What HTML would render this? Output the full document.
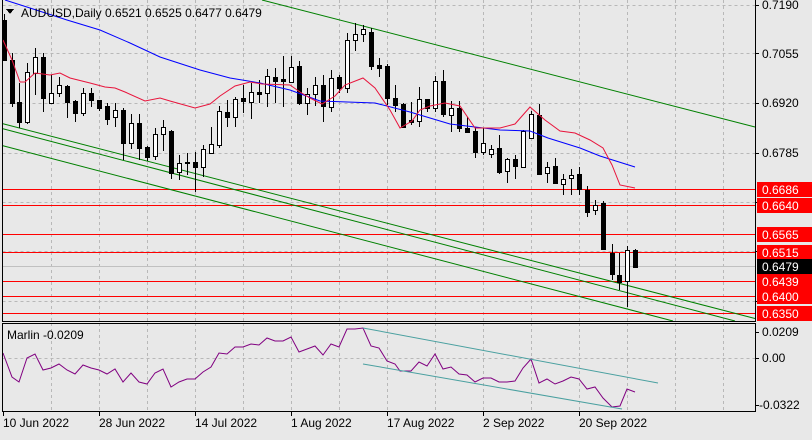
<!DOCTYPE html>
<html><head><meta charset="utf-8">
<style>
html,body{margin:0;padding:0;background:#e8e8e8;}
body{width:812px;height:435px;overflow:hidden;font-family:"Liberation Sans",sans-serif;}
svg text{font-family:"Liberation Sans",sans-serif;font-size:12px;}
</style></head><body>
<svg id="s" width="812" height="435" xmlns="http://www.w3.org/2000/svg" shape-rendering="crispEdges">
<rect width="812" height="435" fill="#e8e8e8"/>
<g stroke="#b8b8b8" stroke-dasharray="3,3" stroke-width="1">
<path d="M2.5 5.5H755M2.5 53.5H755M2.5 103.5H755M2.5 153.5H755M2.5 202.5H755M2.5 251.5H755M2.5 301.5H755M2.5 358.5H755"/>
<path d="M51.5 0V321M99.5 0V321M147.5 0V321M195.5 0V321M243.5 0V321M291.5 0V321M339.5 0V321M387.5 0V321M435.5 0V321M483.5 0V321M531.5 0V321M579.5 0V321M627.5 0V321M675.5 0V321M723.5 0V321"/>
<path d="M51.5 323V411M99.5 323V411M147.5 323V411M195.5 323V411M243.5 323V411M291.5 323V411M339.5 323V411M387.5 323V411M435.5 323V411M483.5 323V411M531.5 323V411M579.5 323V411M627.5 323V411M675.5 323V411M723.5 323V411"/>
</g>
<line x1="2" y1="266.5" x2="755" y2="266.5" stroke="#c0c0c0"/>
<g stroke="#ff0000" stroke-width="1">
<path d="M2 189.5H755M2 205.5H755M2 234.5H755M2 252.5H755M2 281.5H755M2 296.5H755M2 313.5H755"/>
</g>
<g stroke="#008000" stroke-width="1" fill="none" shape-rendering="auto">
<path d="M262 0L755 127"/>
<path d="M2 123.5L755 318.5"/>
<path d="M2 128.5L735 321"/>
<path d="M2 145.5L673 321"/>
</g>
<g id="c"></g>
<polyline shape-rendering="auto" fill="none" stroke="#0000ff" stroke-width="1" points="5,0 30,8 67,20 100,30 130,43 160,57 200,70 230,78 260,83 290,90 320,101 375,103 410,112 450,124 500,130 530,131 548,138 580,148 600,156 635,167"/>
<polyline shape-rendering="auto" fill="none" stroke="#e8143c" stroke-width="1" points="3,40 12,60 20,82 25,82 35,73 50,75 60,73 70,78 90,83 105,87 115,88 125,92 145,101 160,98 170,101 195,108 210,104 220,96 235,86 250,82 262,84 290,85 300,92 310,98 322,104 335,96 345,85 363,78 375,88 390,110 400,128 412,121 420,110 430,106 445,103 460,106 475,128 485,128 500,128 515,124 530,107 545,120 560,131 575,133 590,140 603,148 612,165 620,185 635,188"/>
<polyline shape-rendering="auto" fill="none" stroke="#800080" stroke-width="1" points="3,353 12,377 19,382 27,358 35,354 43,370 51,368 59,364 67,370 75,374 83,365 91,368 99,370 107,374 115,369 123,382 131,373 139,382 147,384 155,373 163,369 171,387 179,382 187,379 195,379 203,372 211,367 219,353 227,354 235,347 243,347 251,344 259,345 267,338 275,341 283,341 291,337 299,352 307,349 315,346 323,355 331,344 339,347 347,329 355,329 363,328 371,346 379,348 387,361 395,364 400,371 411,371 419,362 427,366 435,354 443,369 451,367 459,374 467,375 475,382 483,378 491,378 499,382 507,382 515,381 523,368 531,359 539,383 547,379 555,384 563,381 571,377 579,379 587,389 595,387 603,398 612,407 620,406 627,389 635,392"/>
<g stroke="#4aa0a0" stroke-width="1" shape-rendering="auto">
<line x1="363" y1="328" x2="658" y2="383"/>
<line x1="363" y1="364" x2="622" y2="409"/>
</g>
<g fill="none" stroke="#000" stroke-width="1">
<path d="M2.5 0V321.5H755.5V0"/>
<rect x="2.5" y="323.5" width="753" height="88"/>
</g>
<g stroke="#000">
<path d="M755 5.5h4M755 53.5h4M755 103.5h4M755 153.5h4M755 202.5h4M755 251.5h4M755 301.5h4M755 332.5h4M755 358.5h4M755 405.5h4"/>
<path d="M3.5 411v5M99.5 411v5M195.5 411v5M291.5 411v5M387.5 411v5M483.5 411v5M579.5 411v5"/>
</g>
<polygon points="6,9 14,9 10,14" fill="#000"/>
<text x="21" y="17" fill="#000">AUDUSD,Daily  0.6521 0.6525 0.6477 0.6479</text>
<text x="7" y="339" fill="#000">Marlin -0.0209</text>
<g fill="#000">
<text x="762" y="9">0.7190</text>
<text x="762" y="58">0.7055</text>
<text x="762" y="107">0.6920</text>
<text x="762" y="157">0.6785</text>
<text x="762" y="336">0.0209</text>
<text x="762" y="362">0.00</text>
<text x="759" y="409">-0.0322</text>
<text x="3" y="427">10 Jun 2022</text>
<text x="99" y="427">28 Jun 2022</text>
<text x="195" y="427">14 Jul 2022</text>
<text x="291" y="427">1 Aug 2022</text>
<text x="387" y="427">17 Aug 2022</text>
<text x="483" y="427">2 Sep 2022</text>
<text x="579" y="427">20 Sep 2022</text>
</g>
<g>
<rect x="757" y="182" width="55" height="15" fill="#ff0000"/><text x="762" y="194" fill="#fff">0.6686</text>
<rect x="757" y="198" width="55" height="15" fill="#ff0000"/><text x="762" y="210" fill="#fff">0.6640</text>
<rect x="757" y="227" width="55" height="15" fill="#ff0000"/><text x="762" y="239" fill="#fff">0.6565</text>
<rect x="757" y="245" width="55" height="15" fill="#ff0000"/><text x="762" y="257" fill="#fff">0.6515</text>
<rect x="757" y="259" width="55" height="15" fill="#000"/><text x="762" y="271" fill="#fff">0.6479</text>
<rect x="757" y="274" width="55" height="15" fill="#ff0000"/><text x="762" y="286" fill="#fff">0.6439</text>
<rect x="757" y="289" width="55" height="15" fill="#ff0000"/><text x="762" y="301" fill="#fff">0.6400</text>
<rect x="757" y="306" width="55" height="15" fill="#ff0000"/><text x="762" y="318" fill="#fff">0.6350</text>
</g>
</svg>
<script>
var d=[
[4,14,60,20,60,0],[12,53,107,60,103,0],[19,83,128,102,122,0],[27,63,124,122,72,1],[35,48,95,73,57,1],[43,53,112,57,98,0],[51,75,103,103,93,1],[59,77,97,93,85,1],[67,85,118,86,102,0],[75,100,122,101,113,0],[83,88,116,113,93,1],[91,88,107,93,100,0],[99,100,111,100,108,0],[107,103,125,106,119,0],[115,103,127,117,110,1],[123,108,160,110,143,0],[131,114,149,143,123,1],[139,114,160,123,148,0],[147,146,161,147,157,0],[155,128,160,156,134,1],[163,120,151,134,127,1],[171,130,179,131,173,0],[179,155,180,172,163,1],[187,153,175,162,163,0],[195,152,192,162,167,0],[203,145,177,167,149,1],[211,127,153,153,144,1],[219,106,148,145,111,1],[227,100,127,112,117,0],[235,97,127,117,99,1],[243,85,113,98,101,0],[251,83,119,102,92,1],[259,80,103,92,94,0],[267,69,107,93,76,1],[275,68,103,77,81,0],[283,56,107,79,81,0],[291,56,83,82,67,1],[299,61,105,66,103,0],[307,88,115,103,94,1],[315,77,106,94,85,1],[323,75,122,85,106,0],[331,70,112,107,78,1],[339,75,93,77,88,0],[347,33,93,88,40,1],[355,23,51,40,34,1],[363,25,42,34,29,1],[371,28,70,32,66,0],[379,58,77,65,68,0],[387,64,105,66,98,0],[395,85,112,98,105,0],[403,103,127,104,127,0],[411,102,125,120,122,0],[419,87,127,121,99,1],[427,99,112,99,108,0],[435,76,112,108,81,1],[443,70,117,81,114,0],[451,101,132,115,108,1],[459,101,132,108,128,0],[467,117,133,128,132,0],[475,128,158,131,152,0],[483,128,155,152,143,1],[491,145,158,154,149,1],[499,135,174,148,172,0],[507,158,183,171,159,1],[515,155,179,159,166,0],[523,130,167,167,131,1],[531,111,139,138,114,1],[539,104,174,115,174,0],[547,162,183,173,167,1],[555,158,183,166,183,0],[563,174,195,184,179,1],[571,169,195,178,175,1],[579,167,195,174,189,0],[587,186,217,190,212,0],[595,200,215,210,205,1],[603,201,250,203,249,0],[612,244,280,253,274,0],[619,253,290,275,282,0],[627,246,307,281,250,1],[635,249,267,250,267,0]];
var g=document.getElementById('c'),h='';
d.forEach(function(c){var x=c[0],t=Math.min(c[3],c[4]),b=Math.max(c[3],c[4]);if(b-t<1)b=t+1;
h+='<line x1="'+(x+.5)+'" y1="'+c[1]+'" x2="'+(x+.5)+'" y2="'+c[2]+'" stroke="#000"/>';
h+='<rect x="'+(x-1.5)+'" y="'+(t+.5)+'" width="4" height="'+(b-t)+'" fill="'+(c[5]?'#fff':'#000')+'" stroke="#000"/>';});
g.innerHTML=h;
</script>
</body></html>
